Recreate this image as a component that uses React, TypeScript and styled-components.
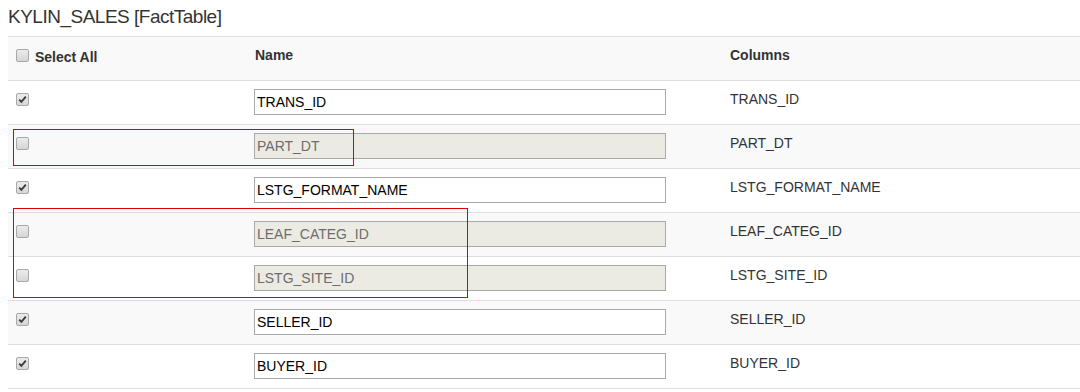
import React from "react";
import styled, { createGlobalStyle } from "styled-components";

type Column = {
  name: string;
  selected: boolean;
};

const columns: Column[] = [
  { name: "TRANS_ID", selected: true },
  { name: "PART_DT", selected: false },
  { name: "LSTG_FORMAT_NAME", selected: true },
  { name: "LEAF_CATEG_ID", selected: false },
  { name: "LSTG_SITE_ID", selected: false },
  { name: "SELLER_ID", selected: true },
  { name: "BUYER_ID", selected: true }
];

// red annotation boxes drawn over the table
const marks = [
  { left: 13, top: 129, width: 341, height: 37 },
  { left: 13, top: 208, width: 455, height: 90 }
];

const GlobalStyle = createGlobalStyle`
  body {
    margin: 0;
    background: #ffffff;
    font-family: "Liberation Sans", Arial, sans-serif;
    font-size: 14px;
    color: #333333;
  }
`;

const CheckBox = ({ checked }: { checked?: boolean }) => (
  <Box>
    {checked ? (
      <svg width="9" height="9" viewBox="0 0 9 9">
        <path
          d="M1.2 4.6 L3.4 6.9 L7.8 1.6"
          fill="none"
          stroke="#3a3a3a"
          strokeWidth="1.8"
        />
      </svg>
    ) : null}
  </Box>
);

const App = () => {
  return (
    <Page>
      <GlobalStyle />
      <Title>KYLIN_SALES [FactTable]</Title>
      <Table>
        <HeadRow>
          <Cell>
            <SelectAll>
              <CheckBox />
              <HeadLabel shift={2}>Select All</HeadLabel>
            </SelectAll>
          </Cell>
          <Cell>
            <HeadLabel>Name</HeadLabel>
          </Cell>
          <Cell>
            <HeadLabel>Columns</HeadLabel>
          </Cell>
        </HeadRow>
        {columns.map((col, idx) => (
          <Row key={col.name} striped={idx % 2 === 1}>
            <Cell>
              <CheckBox checked={col.selected} />
            </Cell>
            <Cell>
              <NameInput
                defaultValue={col.name}
                disabled={!col.selected}
                readOnly
              />
            </Cell>
            <Cell>
              <ColumnText>{col.name}</ColumnText>
            </Cell>
          </Row>
        ))}
      </Table>
      {marks.map((m, i) => (
        <Mark
          key={i}
          style={{ left: m.left, top: m.top, width: m.width, height: m.height }}
        />
      ))}
    </Page>
  );
};

const Page = styled.div`
  position: relative;
  width: 1080px;
  height: 392px;
  padding-left: 8px;
  box-sizing: border-box;
  overflow: hidden;
`;

const Title = styled.h3`
  margin: 0 0 2px;
  height: 34px;
  line-height: 34px;
  font-size: 19px;
  font-weight: normal;
  letter-spacing: -0.5px;
  color: #333333;
`;

const Table = styled.div`
  display: flex;
  flex-direction: column;
  border-bottom: 1px solid #dddddd;
`;

const Row = styled.div<{ striped?: boolean }>`
  display: grid;
  grid-template-columns: 239px 475px 1fr;
  height: 44px;
  box-sizing: border-box;
  border-top: 1px solid #dddddd;
  background: ${({ striped }) => (striped ? "#f9f9f9" : "#ffffff")};
`;

const HeadRow = styled(Row)`
  background: #f9f9f9;
`;

const Cell = styled.div`
  padding: 8px;
  line-height: 20px;
  min-width: 0;
`;

const SelectAll = styled.label`
  display: flex;
  align-items: flex-start;
  gap: 6px;
`;

const HeadLabel = styled.span<{ shift?: number }>`
  display: block;
  padding-top: ${({ shift = 0 }) => shift}px;
  font-weight: bold;
  font-size: 14px;
  color: #333333;
`;

const Box = styled.span`
  display: flex;
  align-items: center;
  justify-content: center;
  width: 13px;
  height: 13px;
  margin-top: 4px;
  box-sizing: border-box;
  border: 1px solid #a8a8a8;
  border-radius: 2px;
  background: linear-gradient(#ececec, #d6d6d6);
`;

const NameInput = styled.input`
  display: block;
  width: 412px;
  height: 26px;
  margin: 0 0 0 -1px;
  padding: 0 2px;
  box-sizing: border-box;
  border: 1px solid #a9a9a9;
  border-radius: 0;
  outline: none;
  background: #ffffff;
  font-family: "Liberation Sans", Arial, sans-serif;
  font-size: 14px;
  color: #000000;

  &:disabled {
    background: #ebebe4;
    color: #6d6d6d;
  }
`;

const ColumnText = styled.span`
  font-size: 14px;
  color: #333333;
`;

const Mark = styled.div`
  position: absolute;
  box-sizing: border-box;
  border: 1px solid #e10000;
  pointer-events: none;
`;

export default App;
